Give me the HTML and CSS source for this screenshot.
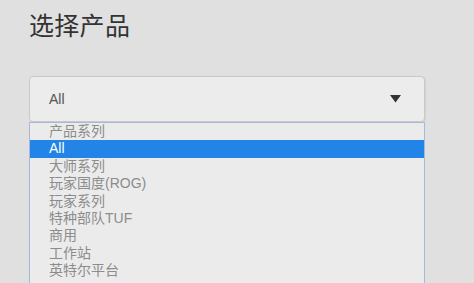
FILE: index.html
```html
<!DOCTYPE html>
<html lang="zh">
<head>
<meta charset="utf-8">
<link rel="stylesheet" href="styles.css">
</head>
<body>
<div class="page">
  <h1 class="title">选择产品</h1>
  <div class="select">
    <span class="value">All</span>
    <svg class="arrow" width="11" height="8" viewBox="0 0 11 8"><path d="M0 0H11L5.5 7.5Z" fill="#333"/></svg>
  </div>
  <ul class="list">
    <li class="item">产品系列</li>
    <li class="item active">All</li>
    <li class="item">大师系列</li>
    <li class="item">玩家国度(ROG)</li>
    <li class="item">玩家系列</li>
    <li class="item">特种部队TUF</li>
    <li class="item">商用</li>
    <li class="item">工作站</li>
    <li class="item">英特尔平台</li>
  </ul>
</div>
</body>
</html>
```
FILE: styles.css
```css
html, body {
  margin: 0;
  padding: 0;
  background: #e0e0e0;
  overflow: hidden;
  height: 283px;
}
.page {
  padding: 7px 0 0 29px;
  font-family: "Liberation Sans", "Noto Sans CJK SC", sans-serif;
}
.title {
  margin: 0;
  font-size: 25px;
  font-weight: normal;
  line-height: 34px;
  color: #333;
  letter-spacing: 0.3px;
  font-family: "Noto Sans CJK SC", sans-serif;
}
.select {
  margin-top: 35px;
  height: 44px;
  border: 1px solid #c8c8c8;
  border-radius: 4px;
  background: #ececec;
  box-shadow: 1px 1px 2px rgba(0,0,0,0.06);
  display: flex;
  align-items: center;
  justify-content: space-between;
  padding: 0 23px 0 19px;
  box-sizing: content-box;
  width: 352px;
}
.value {
  font-size: 14px;
  color: #555;
}
.arrow {
  display: block;
}
.list {
  list-style: none;
  margin: 0;
  padding: 0;
  width: 394px;
  border: 1px solid #a9b6de;
  border-bottom: none;
  background: #ebebeb;
  height: 160px;
  overflow: hidden;
}
.item {
  height: 17.4px;
  line-height: 17.4px;
  padding-left: 19px;
  font-size: 14px;
  color: #8c8c8c;
  white-space: nowrap;
}
.item.active {
  background: #2184e6;
  color: #fff;
}
```
